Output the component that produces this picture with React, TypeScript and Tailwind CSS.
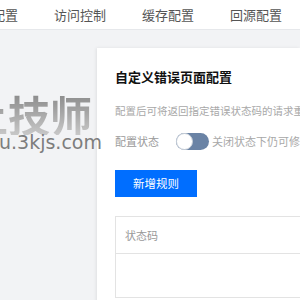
import React from 'react';

const tabs = ['基础配置', '访问控制', '缓存配置', '回源配置'];

export default function App() {
    return (
        <div
            className="relative w-[300px] h-[300px] overflow-hidden bg-[#f2f3f5]"
            style={{ fontFamily: '"Noto Sans CJK SC", "Noto Sans", sans-serif' }}
        >
            {/* top tabs */}
            <div className="h-[30px] bg-white border-b border-[#e6e8eb] flex items-center">
                <div className="flex gap-[36px] ml-[-34px] text-[13px] leading-[16px] text-[#555]">
                    {tabs.map((t) => (
                        <span key={t} className="whitespace-nowrap">{t}</span>
                    ))}
                </div>
            </div>

            <div className="flex">
                <div className="w-[97px] shrink-0" />
                <div className="flex-1 mt-[18px] h-[260px] bg-white shadow-[-1px_0_3px_rgba(0,0,0,0.08)] pl-[18px] pt-[21px] overflow-hidden">
                    <h2 className="text-[13px] leading-[16px] font-bold text-[#111] whitespace-nowrap">自定义错误页面配置</h2>
                    <p className="mt-[19px] text-[10.5px] leading-[14px] text-[#a8a8a8] whitespace-nowrap">
                        配置后可将返回指定错误状态码的请求重定向至自定义页面
                    </p>
                    <div className="mt-[15px] flex items-center h-[17px] whitespace-nowrap">
                        <span className="shrink-0 text-[11px] text-[#9a9a9a]">配置状态</span>
                        <div className="shrink-0 ml-[17px] w-[33px] h-[17px] rounded-full bg-[#6a83a5] relative">
                            <div className="absolute left-0 top-0 w-[17px] h-[17px] rounded-full bg-white border border-[#c9d0d9]" />
                        </div>
                        <span className="shrink-0 ml-[3px] text-[11px] text-[#a8a8a8]">关闭状态下仍可修改配置</span>
                    </div>
                    <button className="mt-[20px] w-[82px] h-[27px] bg-[#006eff] text-white text-[11.5px] flex items-center justify-center">
                        新增规则
                    </button>
                    <div className="mt-[19px] border border-[#e3e3e3] border-r-0 h-[82px] flex flex-col">
                        <div className="h-[37px] border-b border-[#e3e3e3] flex items-center pl-[9px] text-[11px] text-[#999]">
                            状态码
                        </div>
                        <div className="flex-1" />
                    </div>
                </div>
            </div>

            {/* watermark */}
            <div className="absolute left-[-34px] top-[93px] pointer-events-none select-none">
                <div
                    className="text-[42px] leading-[42px] font-bold whitespace-nowrap bg-clip-text text-transparent bg-gradient-to-b from-[#8a8a8a] to-[#c8c8c8]"
                    style={{ fontFamily: '"Noto Sans CJK SC", sans-serif' }}
                >
                    上技师
                </div>
            </div>
            <div
                className="absolute left-[-1px] top-[131px] text-[19px] leading-[22px] text-[#7d7d7d] whitespace-nowrap pointer-events-none"
                style={{ fontFamily: '"DejaVu Sans", sans-serif' }}
            >
                u.3kjs.com
            </div>
        </div>
    );
}
